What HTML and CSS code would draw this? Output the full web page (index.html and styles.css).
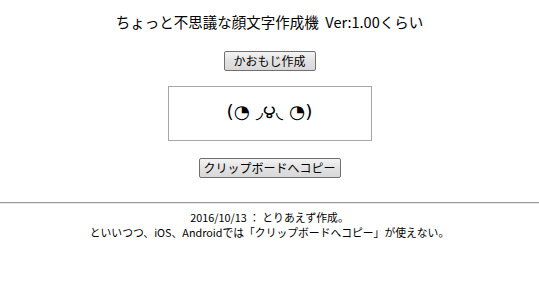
FILE: index.html
```html
<!DOCTYPE html>
<html lang="ja">
<head>
<meta charset="utf-8">
<title>ちょっと不思議な顔文字作成機</title>
<link rel="stylesheet" href="styles.css">
</head>
<body>
<main class="page">
  <h1 class="title">ちょっと不思議な顔文字作成機&nbsp;&nbsp;Ver:1.00くらい</h1>
  <button class="btn btn-make" type="button">かおもじ作成</button>
  <div class="output">(◔ ◞౪◟ ◔)</div>
  <button class="btn btn-copy" type="button">クリップボードへコピー</button>
</main>
<hr class="rule">
<footer class="notes">
  <p>2016/10/13 ： とりあえず作成。</p>
  <p>といいつつ、iOS、Androidでは「クリップボードへコピー」が使えない。</p>
</footer>
</body>
</html>
```

FILE: styles.css
```css
html, body {
  margin: 0;
  padding: 0;
  background: #ffffff;
}
body {
  font-family: "Noto Sans CJK JP", "DejaVu Sans", sans-serif;
  color: #000;
  width: 539px;
}
.page {
  display: flex;
  flex-direction: column;
  align-items: center;
  padding-top: 12px;
}
.title {
  margin: 0;
  font-size: 14.5px;
  font-weight: normal;
  line-height: 20px;
  height: 20px;
  white-space: nowrap;
}
.btn {
  font-family: "Noto Sans CJK JP", sans-serif;
  font-size: 12px;
  line-height: 16px;
  height: 20px;
  padding: 0 2px;
  border: 1px solid #707070;
  border-radius: 2px;
  background: linear-gradient(#f3f3f3, #e2e2e2 50%, #d8d8d8);
  color: #000;
  white-space: nowrap;
}
.btn-make {
  margin-top: 19px;
  width: 92px;
}
.output {
  margin-top: 15px;
  width: 202px;
  height: 53px;
  border: 1px solid #a6a6a6;
  display: flex;
  align-items: center;
  justify-content: center;
  font-family: "DejaVu Sans", "Noto Sans CJK JP", sans-serif;
  font-size: 18.5px;
  white-space: pre;
}
.btn-copy {
  margin-top: 17px;
  width: 142px;
}
.rule {
  margin: 24px 0 0;
  height: 0;
  border: 0;
  border-top: 1px solid #9a9a9a;
  border-bottom: 1px solid #e6e6e6;
}
.notes {
  padding-top: 6px;
  text-align: center;
  font-size: 10.8px;
  line-height: 15px;
}
.notes p {
  margin: 0;
}
```
